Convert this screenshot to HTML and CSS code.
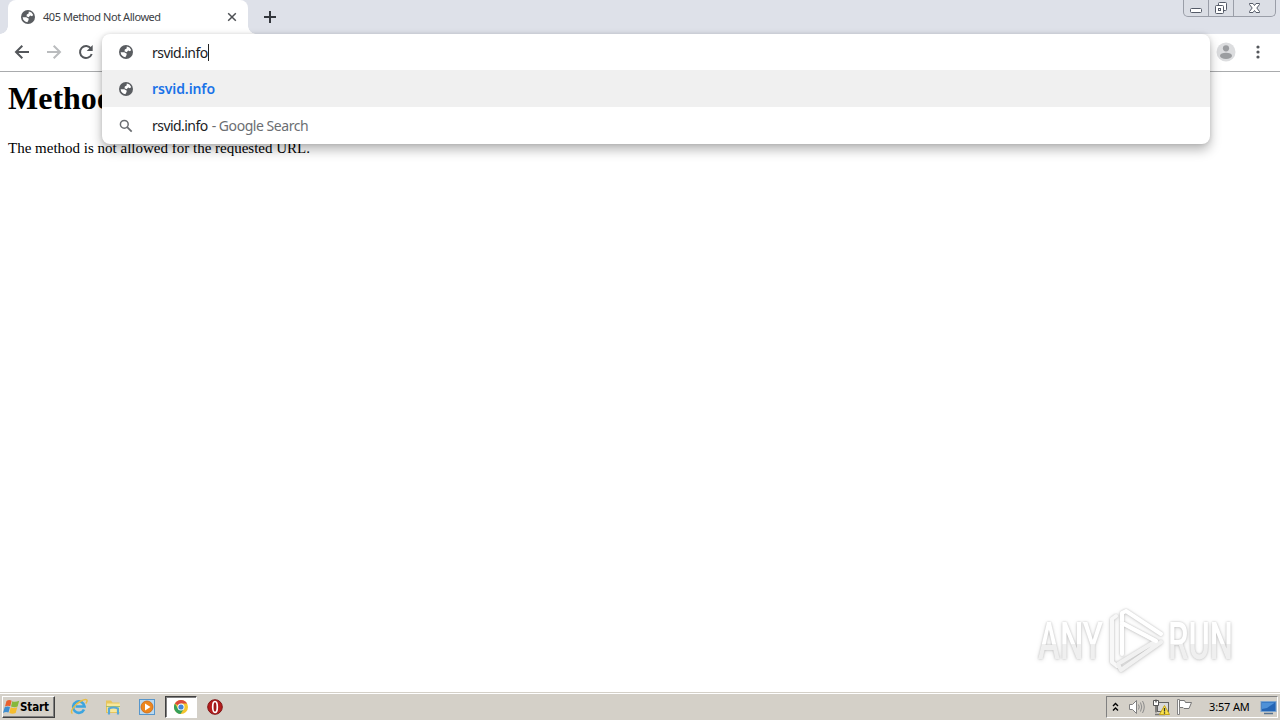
FILE: index.html
```html
<!DOCTYPE html>
<html lang="en">
<head>
    <meta charset="UTF-8">
    <meta name="viewport" content="width=device-width, initial-scale=1.0">
    <title>405 Method Not Allowed</title>
    <link rel="stylesheet" href="styles.css">
</head>
<body>
    <!-- shared globe icon -->
    <svg class="defs" width="0" height="0">
        <symbol id="globe" viewBox="0 0 16 16">
            <circle cx="8" cy="8" r="7" fill="#5a5d61"/>
            <path d="M8.800 2.500 11.500 3.600 13.200 6 12 7.200 10.200 6.500 8.600 8.200 6.500 7.300 6.800 5.500 8.600 4.500Z" fill="#fff"/>
            <path d="M2.600 8.200H6.300L8.800 9.800 8.300 11.500 7.400 13.300C5 13 3 11 2.600 8.200Z" fill="#fff"/>
        </symbol>
    </svg>

    <div class="tab-strip">
        <div class="tab">
            <svg class="tab-icon" width="16" height="16"><use href="#globe"/></svg>
            <span class="tab-title">405 Method Not Allowed</span>
            <svg class="tab-close" width="10" height="10" viewBox="0 0 10 10"><path d="M1.2 1.2 8.8 8.8M8.8 1.2 1.2 8.8" stroke="#4d5054" stroke-width="1.5"/></svg>
        </div>
        <svg class="new-tab" width="12" height="12" viewBox="0 0 12 12"><path d="M6 0V12M0 6H12" stroke="#34373d" stroke-width="2"/></svg>
        <div class="window-buttons">
            <div class="window-button minimize">
                <svg width="14" height="16" viewBox="0 0 14 16"><rect x="1.500" y="8.500" width="11" height="4" rx="1" fill="#fff" stroke="#555b68"/></svg>
            </div>
            <div class="window-button restore">
                <svg width="14" height="16" viewBox="0 0 14 16"><g fill="#fff" stroke="#555b68"><rect x="4.500" y="2.500" width="8" height="8" rx="1"/><rect x="1.500" y="5.500" width="8" height="8" rx="1"/><rect x="4.500" y="8.500" width="2" height="2"/></g></svg>
            </div>
            <div class="window-button close">
                <svg width="14" height="16" viewBox="0 0 14 16"><path d="M1.500 3.500H5L6.500 5.500 8 3.500H11.500V4.500L8.800 8 11.500 11.500V12.500H8L6.500 10.500 5 12.500H1.500V11.500L4.200 8 1.500 4.500Z" fill="#fff" stroke="#555b68"/></svg>
            </div>
        </div>
    </div>

    <div class="toolbar">
        <svg class="nav-icon" width="16" height="16" viewBox="0 0 16 16"><path d="M15 8H2.500M8.300 1.700 2 8 8.300 14.300" fill="none" stroke="#54575b" stroke-width="2"/></svg>
        <svg class="nav-icon" width="16" height="16" viewBox="0 0 16 16"><path d="M1 8H13.500M7.700 1.700 14 8 7.700 14.300" fill="none" stroke="#babcbe" stroke-width="2"/></svg>
        <svg class="nav-icon" width="16" height="16" viewBox="0 0 16 16"><path d="M13 4.600A6 6 0 1 0 13.700 10" fill="none" stroke="#54575b" stroke-width="2"/><path d="M14.700 1V7H8.700Z" fill="#54575b"/></svg>
        <div class="toolbar-right">
            <svg width="20" height="20" viewBox="0 0 20 20"><circle cx="10" cy="10" r="9.500" fill="#dcdddf"/><circle cx="10" cy="6.300" r="3.100" fill="#9b9da0"/><ellipse cx="10" cy="13.800" rx="6" ry="3.100" fill="#9b9da0"/></svg>
            <svg width="4" height="16" viewBox="0 0 4 16"><g fill="#54575b"><circle cx="2" cy="3" r="1.600"/><circle cx="2" cy="8" r="1.600"/><circle cx="2" cy="13" r="1.600"/></g></svg>
        </div>
    </div>

    <div class="page">
        <h1>Method Not Allowed</h1>
        <p>The method is not allowed for the requested URL.</p>
        <!-- watermark -->
        <svg class="watermark" width="210" height="74" viewBox="0 0 210 74">
            <defs>
                <linearGradient id="fade" x1="0" y1="0" x2="0" y2="1">
                    <stop offset="0.550" stop-color="#fff"/>
                    <stop offset="0.550" stop-color="#efefef"/>
                </linearGradient>
            </defs>
            <g class="brand" fill="url(#fade)">
                <text x="8" y="54" textLength="65" lengthAdjust="spacingAndGlyphs">ANY</text>
                <text x="138" y="54" textLength="65" lengthAdjust="spacingAndGlyphs">RUN</text>
            </g>
            <g class="brand-mark" fill="none" stroke-width="4" stroke-linejoin="round" stroke-linecap="round">
                <path d="M86 11 82 14V57L87 61" stroke="#f8f8f8"/>
                <path d="M92 49V8L96 6 131 29" stroke="#fff"/>
                <path d="M92 18 126 36 88 59 91 65 131 37" stroke="#f1f1f1"/>
                <path d="M92 18 126 36" stroke="#fff"/>
            </g>
        </svg>
    </div>

    <div class="omnibox">
        <div class="row">
            <svg width="16" height="16"><use href="#globe"/></svg>
            <span class="query">rsvid.info</span><i class="caret"></i>
        </div>
        <div class="row selected">
            <svg width="16" height="16"><use href="#globe"/></svg>
            <span class="url">rsvid.info</span>
        </div>
        <div class="row">
            <svg width="16" height="16" viewBox="0 0 16 16"><circle cx="6.300" cy="6.300" r="3.900" fill="none" stroke="#6a6d71" stroke-width="1.500"/><path d="M9.200 9.200 13.700 13.700" stroke="#6a6d71" stroke-width="1.800"/></svg>
            <span class="query">rsvid.info</span><span class="hint">- Google Search</span>
        </div>
    </div>

    <div class="taskbar">
        <div class="start">
            <svg width="17" height="16" viewBox="0 0 17 16">
                <path d="M3.500 2Q6 .3 8.600 1.700L7.300 7.200Q4.500 6 2 7.600Z" fill="#e9602e"/>
                <path d="M9.300 2.200Q12 3.600 16.200 1.800L14.600 7.600Q11.500 9 8 7.500Z" fill="#86b83c"/>
                <path d="M1.700 8.300Q4.200 6.800 7 8L5.500 13.500Q3 12.300 0 13.900Z" fill="#3e8ed0"/>
                <path d="M7.700 8.300Q10.500 9.700 14.300 8.200L12.700 14Q9.500 15.500 6.300 14Z" fill="#f5bd2f"/>
            </svg>
            <span>Start</span>
        </div>
        <div class="quick-launch">
            <div class="task">
                <svg width="18" height="18" viewBox="0 0 18 18"><path d="M14 11.500A5.700 5.700 0 1 1 14.500 8.500H5.500" fill="none" stroke="#3da5df" stroke-width="2.700"/><path d="M2.500 15.500C-1 14 5 6 11 3S18.500 2 15.800 5.500" fill="none" stroke="#e8bd43" stroke-width="1.400"/></svg>
            </div>
            <div class="task">
                <svg width="18" height="18" viewBox="0 0 18 18"><path d="M2 2.500H7L8.500 4.500H15.500V15H2Z" fill="#e7c55c"/><path d="M3 5.500H16V14H3Z" fill="#f7e79b"/><path d="M2 8.500H16" stroke="#a6bd6a"/><path d="M5 16.500V10.500Q9.500 8.500 14 10.500V16.500" fill="none" stroke="#58a8d7" stroke-width="2.200"/></svg>
            </div>
            <div class="task">
                <svg width="18" height="18" viewBox="0 0 18 18"><rect x="1.500" y="1.500" width="15" height="15" fill="#b9d9f0" stroke="#5796cb"/><circle cx="9" cy="9" r="6" fill="#ed861c" stroke="#cb6711" stroke-width=".8"/><path d="M7 5.500 12.500 9 7 12.500Z" fill="#fff"/></svg>
            </div>
            <div class="task active">
                <svg width="16" height="16" viewBox="0 0 16 16"><circle cx="8" cy="8" r="7" fill="#f4c52e"/><path d="M8 8 1.900 4.500A7 7 0 0 1 14.100 4.500H8Z" fill="#db4a3c"/><path d="M1.900 4.500A7 7 0 0 0 7.500 15L11 9.800 5 9.700Z" fill="#36a05a"/><circle cx="8" cy="8" r="3.500" fill="#fff"/><circle cx="8" cy="8" r="2.600" fill="#4285d8"/></svg>
            </div>
            <div class="task">
                <svg width="18" height="18" viewBox="0 0 18 18"><circle cx="9" cy="9" r="7.300" fill="#b51d1d" stroke="#7f1515"/><ellipse cx="9" cy="9" rx="2.300" ry="5.500" fill="#a01919" stroke="#fff" stroke-width="1.700"/></svg>
            </div>
        </div>
        <div class="tray">
            <svg class="chevron" width="7" height="10" viewBox="0 0 7 10"><path d="M1 4 3.500 1.500 6 4M1 8.500 3.500 6 6 8.500" fill="none" stroke="#000" stroke-width="1.400"/></svg>
            <svg class="speaker" width="18" height="16" viewBox="0 0 18 16"><path d="M1.500 5.500H4.500L8.500 1.500V14.500L4.500 10.500H1.500Z" fill="#fff" stroke="#808080"/><path d="M10.500 5.500Q12 8 10.500 10.500M12.500 3.500Q15 8 12.500 12.500M14.500 2Q18 8 14.500 14" fill="none" stroke="#8b8b8b"/></svg>
            <svg class="network" width="17" height="17" viewBox="0 0 17 17"><rect x="4.500" y="3.500" width="11" height="9" fill="#d9d9d9" stroke="#626262"/><path d="M2 15.500H12" stroke="#777" stroke-width="1.500"/><path d="M.5 1.500H5.500V6.500H.5Z" fill="#fff" stroke="#555"/><path d="M3 .5V3.500M3 6.500V13.500" fill="none" stroke="#555" stroke-width="1.300"/><path d="M11.500 6.500 16.500 15.500H6.500Z" fill="#fbe34b" stroke="#c5a51a"/><path d="M11.500 9V12.500M11.500 13.300V14.700" stroke="#333" stroke-width="1.300"/></svg>
            <svg class="flag" width="17" height="16" viewBox="0 0 17 16"><path d="M1.500 .5H3.500V15.500H1.500Z" fill="#fff" stroke="#858585"/><path d="M3.500 1.500H8.500L9.500 3.500H15.500L13 9.500H8L7 8.500H3.500Z" fill="#fff" stroke="#777"/></svg>
            <span class="clock">3:57 AM</span>
            <svg class="desktop" width="17" height="15" viewBox="0 0 17 15"><rect x="1" y="1.500" width="15" height="10" fill="#2465b5" stroke="#7ba4cf"/><path d="M2 2.500H15L7 8 2 9Z" fill="#4e91d8"/><path d="M4 13.500H13" stroke="#55718f" stroke-width="1.500"/></svg>
        </div>
    </div>
</body>
</html>
```
FILE: styles.css
```css
body {
    margin: 0;
    height: 100vh;
    display: flex;
    flex-direction: column;
    overflow: hidden;
    background-color: #fff;
    font-family: "DejaVu Sans Condensed", "DejaVu Sans", sans-serif;
}

svg {
    display: block;
    flex: none;
}

.defs {
    position: absolute;
}

.tab-strip {
    height: 34px;
    display: flex;
    background-color: #dee1e9;
}

.tab {
    width: 240px;
    height: 34px;
    margin-left: 8px;
    display: flex;
    align-items: center;
    box-sizing: border-box;
    padding: 0 11px 0 12px;
    border-radius: 8px 8px 0 0;
    background-color: #fff;
    position: relative;
}

/* curved feet of the active tab */
.tab::before,
.tab::after {
    content: "";
    position: absolute;
    bottom: 0;
    width: 8px;
    height: 8px;
}

.tab::before {
    left: -8px;
    background: radial-gradient(circle at 0 0, transparent 7.5px, #fff 8px);
}

.tab::after {
    right: -8px;
    background: radial-gradient(circle at 100% 0, transparent 7.5px, #fff 8px);
}

.tab-title {
    margin-left: 7px;
    padding-bottom: 2px;
    font-family: "Noto Sans", sans-serif;
    font-size: 11px;
    letter-spacing: -0.45px;
    color: #3c4043;
    white-space: nowrap;
}

.tab-close {
    margin-left: auto;
}

.new-tab {
    margin: 11px 0 0 16px;
}

.window-buttons {
    display: flex;
    height: 17px;
    box-sizing: border-box;
    margin: 0 4px 0 auto;
    border: 1px solid #9a9ea8;
    border-top: none;
    border-radius: 0 0 5px 5px;
    background-color: #dbdee5;
}

.window-button {
    width: 24px;
    display: flex;
    justify-content: center;
    border-right: 1px solid #9a9ea8;
}

.close {
    width: 41px;
    border-right: none;
}

.toolbar {
    height: 38px;
    box-sizing: border-box;
    display: flex;
    align-items: center;
    gap: 16px;
    padding: 0 20px 2px 14px;
    border-bottom: 1px solid #a9abad;
}

.toolbar-right {
    margin-left: auto;
    display: flex;
    align-items: center;
    gap: 20px;
}

.page {
    flex: 1;
    position: relative;
    padding: 0 8px;
    font-family: "Liberation Serif", serif;
    color: #000;
}

.page h1 {
    margin: 8px 0 0;
    font-size: 32px;
    line-height: 37px;
}

.page p {
    margin: 22px 0 0;
    font-size: 15px;
    line-height: 18px;
}

.watermark {
    position: absolute;
    right: 40px;
    bottom: 13px;
    filter: drop-shadow(0 0 1px rgba(0, 0, 0, 0.2)) drop-shadow(0 1px 2px rgba(0, 0, 0, 0.13));
}

.brand {
    font-family: Roboto, sans-serif;
    font-size: 51px;
    font-weight: 500;
}

.omnibox {
    position: absolute;
    top: 34px;
    left: 102px;
    width: 1108px;
    height: 110px;
    border-radius: 8px;
    overflow: hidden;
    background-color: #fff;
    box-shadow: 0 6px 12px rgba(0, 0, 0, 0.28), 0 0 4px rgba(0, 0, 0, 0.12);
}

.row {
    height: 37px;
    display: flex;
    align-items: center;
    padding-left: 16px;
    font-family: "Noto Sans", sans-serif;
    font-size: 14px;
    white-space: nowrap;
    color: #202124;
}

.row:first-child {
    height: 36px;
}

.selected {
    background-color: #f0f0f0;
}

.query,
.url {
    margin-left: 18px;
    letter-spacing: -0.55px;
}

.url {
    color: #1a73e8;
    font-weight: 600;
    letter-spacing: -0.1px;
}

.hint {
    margin-left: 4px;
    letter-spacing: -0.45px;
    color: #6b6e72;
}

.caret {
    width: 1px;
    height: 17px;
    background-color: #222;
}

.taskbar {
    height: 28px;
    box-sizing: border-box;
    display: flex;
    align-items: center;
    padding: 1px 2px 0;
    border-top: 1px solid #d4d0c8;
    background-color: #d4d0c8;
    box-shadow: inset 0 1px #fff;
}

.start {
    width: 53px;
    height: 22px;
    box-sizing: border-box;
    display: flex;
    align-items: center;
    border: 1px solid;
    border-color: #fff #404040 #404040 #fff;
    box-shadow: inset -1px -1px #808080;
    font-size: 11.5px;
    font-weight: bold;
    letter-spacing: -0.1px;
}

.quick-launch {
    display: flex;
    margin-left: 8px;
    gap: 2px;
}

.task {
    width: 32px;
    height: 22px;
    box-sizing: border-box;
    display: flex;
    align-items: center;
    justify-content: center;
}

.active {
    border: 1px solid;
    border-color: #404040 #fff #fff #404040;
    box-shadow: inset 1px 1px #808080;
    background-color: #fff;
}

.tray {
    margin-left: auto;
    width: 172px;
    height: 22px;
    box-sizing: border-box;
    display: flex;
    align-items: center;
    padding-left: 5px;
    border: 1px solid;
    border-color: #808080 #fff #fff #808080;
}

.speaker {
    margin-left: 9px;
}

.network {
    margin-left: 7px;
}

.flag {
    margin-left: 6px;
}

.clock {
    margin-left: 16px;
    width: 51px;
    padding-bottom: 1px;
    font-family: "Noto Sans", sans-serif;
    font-size: 11px;
    letter-spacing: -0.15px;
    white-space: nowrap;
}
```
